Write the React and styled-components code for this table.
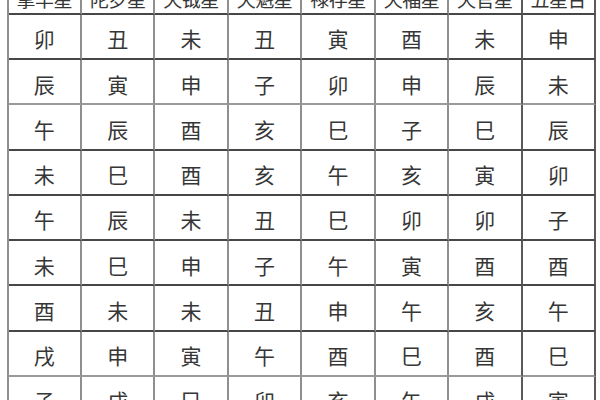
import React from "react";
import styled, { createGlobalStyle } from "styled-components";

const Global = createGlobalStyle`
  html, body { margin: 0; padding: 0; background: #fff; overflow: hidden; }
  body { width: 600px; height: 400px; font-family: "Noto Sans CJK SC", "Noto Sans", sans-serif; }
`;

const Page = styled.div`
  width: 600px;
  height: 400px;
  overflow: hidden;
  background: #fff;
`;

const Grid = styled.div`
  display: grid;
  grid-template-columns: repeat(8, 73.45px);
  grid-auto-rows: 45.25px;
  margin-top: -30.5px;
  margin-left: 6.5px;
  border-left: 2px solid #8f8f8f;
`;

const Cell = styled.div`
  box-sizing: border-box;
  display: flex;
  justify-content: center;
  align-items: ${(p) => (p.$head ? "flex-end" : "center")};
  padding-top: ${(p) => (p.$head ? "0" : "5px")};
  padding-bottom: ${(p) => (p.$head ? "5px" : "0")};
  border-right: 2px solid ${(p) => (p.$darkCol ? "#5a5a5a" : "#8f8f8f")};
  border-bottom: 2px solid ${(p) => (p.$lightRow ? "#9a9a9a" : "#474747")};
  font-family: "Noto Sans CJK SC", "Noto Sans CJK JP", sans-serif;
  font-size: ${(p) => (p.$head ? "19px" : "21px")};
  font-weight: 400;
  color: #363636;
  line-height: 1;
  letter-spacing: ${(p) => (p.$head ? "-0.5px" : "0")};
`;

const headers = ["擎羊星", "陀罗星", "天钺星", "天魁星", "禄存星", "天福星", "天官星", "五星台"];

const rows = [
  ["卯", "丑", "未", "丑", "寅", "酉", "未", "申"],
  ["辰", "寅", "申", "子", "卯", "申", "辰", "未"],
  ["午", "辰", "酉", "亥", "巳", "子", "巳", "辰"],
  ["未", "巳", "酉", "亥", "午", "亥", "寅", "卯"],
  ["午", "辰", "未", "丑", "巳", "卯", "卯", "子"],
  ["未", "巳", "申", "子", "午", "寅", "酉", "酉"],
  ["酉", "未", "未", "丑", "申", "午", "亥", "午"],
  ["戌", "申", "寅", "午", "酉", "巳", "酉", "巳"],
  ["子", "戌", "巳", "卯", "亥", "午", "戌", "寅"],
];

const lightRows = new Set([1, 7]);
const darkCols = new Set([6, 7]);

export default function App() {
  return (
    <Page>
      <Global />
      <Grid>
        {headers.map((h, c) => (
          <Cell key={"h" + c} $head $darkCol={darkCols.has(c)}>
            {h}
          </Cell>
        ))}
        {rows.map((row, r) =>
          row.map((v, c) => (
            <Cell key={r + "-" + c} $lightRow={lightRows.has(r)} $darkCol={darkCols.has(c)}>
              {v}
            </Cell>
          ))
        )}
      </Grid>
    </Page>
  );
}
